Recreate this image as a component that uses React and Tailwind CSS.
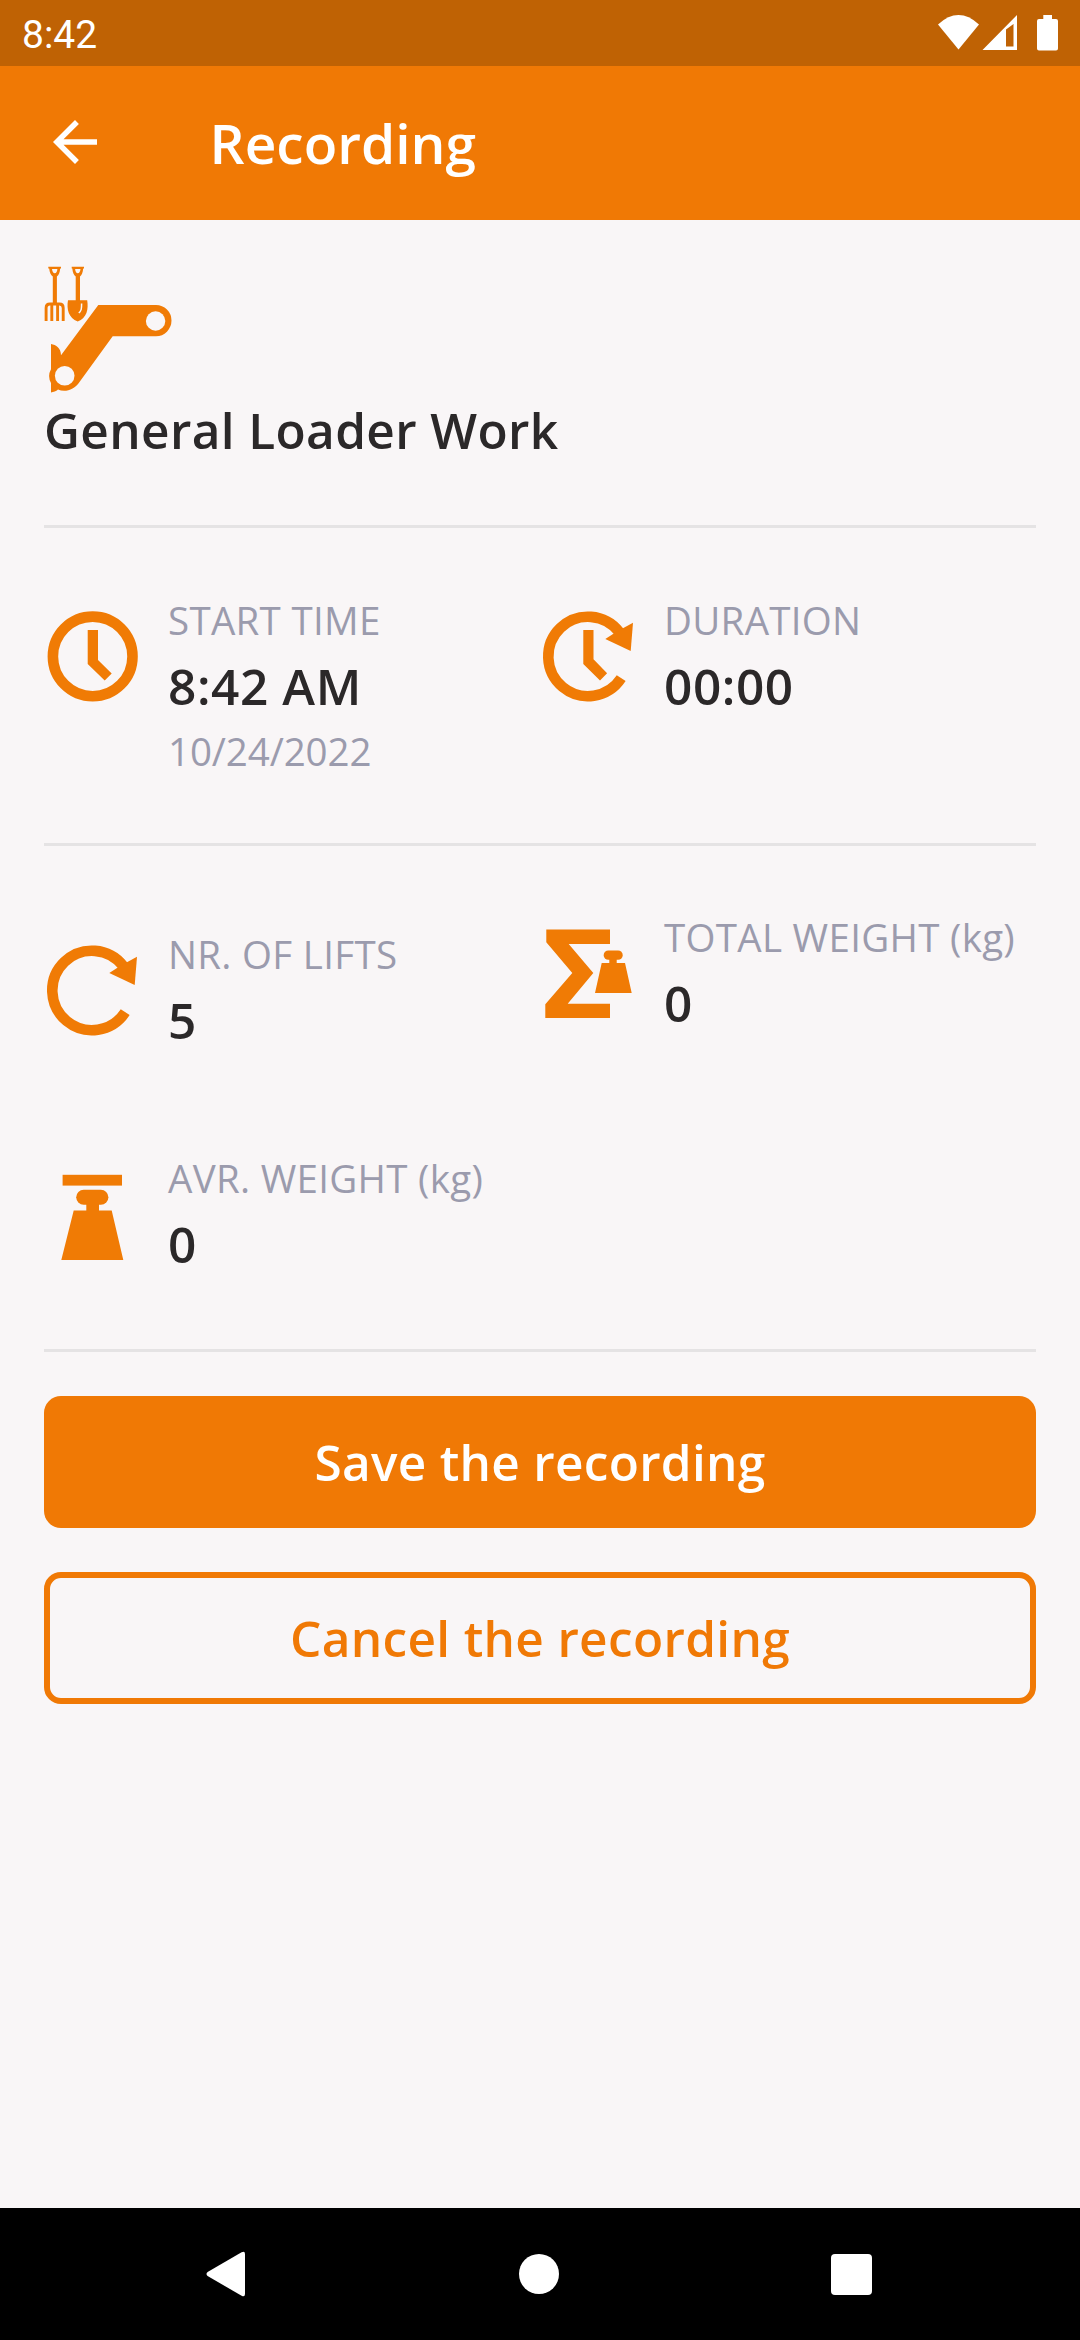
// =============================================
// Recording - Active loader recording screen
// =============================================

// ---------- Icons ----------

function LoaderIcon() {
  return (
    <svg viewBox="0 0 132 132" className="block h-[132px] w-[132px]" fill="currentColor">
      {/* Fork */}
      <path d="M4.3 2.7H17V4.4H16.2C15.8 8.4 14.8 11 12.9 12.4V40H8.8V12.4C6.8 11 5.6 8.4 5.2 4.4H4.3ZM8 5C8.3 7.6 9.2 9.2 10.8 9.3C12.4 9.2 13.1 7.6 13.4 5Z" fillRule="evenodd" />
      <path d="M2.1 57V44Q2.1 40 6 40H15.4Q19.2 40 19.2 44V57M7.8 57V40M13.6 57V40" fill="none" stroke="currentColor" strokeWidth="2.9" />
      {/* Shovel */}
      <path d="M27.7 2.7H40V4.4H39.2C38.8 8.4 37.8 11 36 12.4V36.2H43.2C44.6 45 43 54 33.7 57.4C24.6 54 22.4 45 24 36.2H31.7V12.4C29.8 11 28.7 8.4 28.3 4.4H27.7ZM31.1 5C31.4 7.6 32.2 9.2 33.8 9.3C35.4 9.2 36.2 7.6 36.5 5Z" fillRule="evenodd" />
      <path d="M37.6 39.5C37.6 45 37.5 46.5 34.8 49" fill="none" stroke="#f9f6f7" strokeWidth="1.5" />
      {/* Arm */}
      <path d="M54.3 41H112A15.5 15.6 0 0 1 112 72.2H68.7L35.5 118C30.5 126 21 128.6 14 125.6C12 127.4 9.6 128.3 7 128.4V119Q3.2 112 7 105.2V80C12 80.8 17 84 17 91.3Z" />
      <circle cx="111.6" cy="57" r="9.7" fill="#f9f6f7" />
      <circle cx="20.7" cy="111.8" r="9.8" fill="#f9f6f7" />
    </svg>
  )
}

function ClockIcon() {
  return (
    <svg viewBox="0 0 96 96" className="block h-24 w-24" fill="currentColor">
      <circle cx="48.7" cy="48.4" r="39.8" fill="none" stroke="currentColor" strokeWidth="10.6" />
      <path d="M43.7 21.9H54V51.9L67.7 65.4L60.7 72.6L43.7 55.9Z" />
    </svg>
  )
}

function RepeatIcon({ withHands }) {
  return (
    <svg viewBox="0 0 96 96" className="block h-24 w-24" fill="currentColor">
      <path d="M79.5 24.3A39.7 39.7 0 1 0 81.2 70.2" fill="none" stroke="currentColor" strokeWidth="10.6" />
      <path d="M93 14.7L90.7 43L65.3 31L73.8 25.4L82 20.8Z" />
      {withHands && <path d="M43.3 21.9H53.5V51.2L67.1 65.2L60 72.4L43.3 55.9Z" />}
    </svg>
  )
}

function TotalWeightIcon() {
  return (
    <svg viewBox="0 0 96 96" className="block h-24 w-24" fill="currentColor">
      <path d="M6.3 4.5H70V19H28.7L53.3 48L27.7 78.7H70V93H5.3V79.3L32.3 48L6.3 17.3Z" />
      <rect x="63.7" y="25.4" width="19" height="9.4" rx="4.6" />
      <path d="M69.3 33H76.7V38H85L91.7 68H55L61.7 38H69.3Z" />
    </svg>
  )
}

function WeightIcon() {
  return (
    <svg viewBox="0 0 96 96" className="block h-24 w-24" fill="currentColor">
      <rect x="18.6" y="8.8" width="59.4" height="10.8" />
      <rect x="32.2" y="23.7" width="32.2" height="15" rx="7.5" />
      <path d="M42.3 37H55V44.4H67.7L79.3 94H17.3L29.7 44.4H42.3Z" />
    </svg>
  )
}

// ---------- Layout pieces ----------

function StatusBar() {
  return (
    <div className="flex h-[66px] items-center justify-between bg-[#bf6204] px-[22px] text-white">
      <span className="mt-[3px] font-[Roboto] text-[39px] leading-[46px]">8:42</span>
      <svg viewBox="0 0 120 36" className="h-9 w-[120px]" fill="currentColor">
        <path d="M0 9.4Q20.5 -9.4 41 9.4L20.5 34.4Z" />
        <path d="M44.5 35L79 0V35ZM68 14.5V31.5H75.5V9Z" fillRule="evenodd" />
        <path d="M105.3 0H114V4H118Q120 4 120 6V33.4Q120 35.4 118 35.4H101Q99 35.4 99 33.4V6Q99 4 101 4H105.3Z" />
      </svg>
    </div>
  )
}

function AppBar() {
  return (
    <header className="flex h-[154px] items-center bg-[#f07905] text-white">
      <button className="mb-[3px] ml-[42px]" aria-label="Back">
        <svg viewBox="0 0 24 24" className="block h-[66px] w-[66px]" fill="currentColor">
          <path d="M20 11H7.83l5.59-5.59L12 4l-8 8 8 8 1.41-1.41L7.83 13H20v-2z" />
        </svg>
      </button>
      <h1 className="mb-0.5 ml-[101.5px] text-[55px] leading-[75px] font-semibold">Recording</h1>
    </header>
  )
}

function Divider() {
  return <div className="h-[3px] bg-[#e5e3e4]" />
}

function Stat({ icon, label, value, note }) {
  return (
    <div className="flex w-[496px] items-start gap-7">
      <div className="mt-[14px] text-[#f07b05]">{icon}</div>
      <div className="whitespace-nowrap">
        <p className="text-[38.5px] leading-[53px] tracking-[0.3px] text-[#9b9bad]">{label}</p>
        <p className="mt-1.5 text-[49.5px] leading-[67px] font-semibold tracking-[0.6px] text-[#2b2829]">{value}</p>
        {note && <p className="mt-[5px] text-[38.5px] leading-[53px] tracking-[-0.1px] text-[#9b9bad]">{note}</p>}
      </div>
    </div>
  )
}

function NavBar() {
  return (
    <nav className="flex h-[132px] items-center justify-between bg-black pr-[208px] pl-[206px] text-white">
      <svg viewBox="0 0 40 46" className="h-[46px] w-10" fill="currentColor">
        <path d="M1.6 21L35.6 1.2Q39 -0.4 39 3V43Q39 46.4 35.6 44.8L1.6 25Q-0.6 23 1.6 21Z" />
      </svg>
      <div className="h-10 w-10 rounded-full bg-white" />
      <div className="h-[41px] w-[41px] rounded-[4px] bg-white" />
    </nav>
  )
}

export default function App() {
  return (
    <div className="flex h-[2340px] w-[1080px] flex-col overflow-hidden bg-[#f9f6f7] font-['Open_Sans',sans-serif]">
      <StatusBar />
      <AppBar />

      <main className="flex flex-1 flex-col px-11 pt-11">
        {/* Work type */}
        <div className="text-[#f07b05]">
          <LoaderIcon />
        </div>
        <h2 className="mt-px mb-[61px] text-[49.5px] leading-[67px] font-semibold tracking-[0.38px] text-[#2b2829]">
          General Loader Work
        </h2>
        <Divider />

        {/* Time */}
        <section className="flex h-[315px] items-start pt-[66px]">
          <Stat icon={<ClockIcon />} label="START TIME" value="8:42 AM" note="10/24/2022" />
          <Stat icon={<RepeatIcon withHands />} label="DURATION" value="00:00" />
        </section>
        <Divider />

        {/* Lifts and weights */}
        <section className="flex h-[503px] flex-col pt-[65px]">
          <div className="flex h-[241px] items-start">
            <div className="pt-[17px]">
              <Stat icon={<RepeatIcon />} label="NR. OF LIFTS" value="5" />
            </div>
            <Stat icon={<TotalWeightIcon />} label="TOTAL WEIGHT (kg)" value="0" />
          </div>
          <Stat icon={<WeightIcon />} label="AVR. WEIGHT (kg)" value="0" />
        </section>
        <Divider />

        {/* Actions */}
        <div className="mt-11 flex flex-col gap-11">
          <button className="h-[132px] rounded-[17px] bg-[#f07905] text-[49.5px] font-semibold tracking-[0.3px] text-white">
            Save the recording
          </button>
          <button className="h-[132px] rounded-[17px] border-[6px] border-[#f07905] text-[49.5px] font-semibold tracking-[0.34px] text-[#f07905]">
            Cancel the recording
          </button>
        </div>
      </main>

      <NavBar />
    </div>
  )
}
